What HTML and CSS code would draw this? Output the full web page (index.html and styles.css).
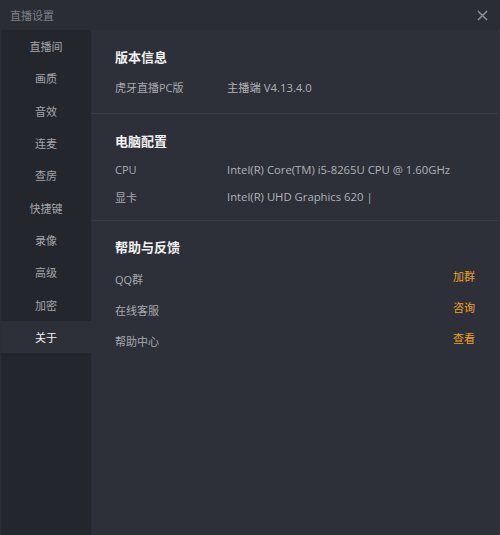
FILE: index.html
```html
<!doctype html>
<html lang="zh-CN">
  <head>
    <meta charset="UTF-8" />
    <title>直播设置</title>
    <link rel="stylesheet" href="styles.css">
  </head>
  <body>
    <div class="window">
      <header class="titlebar">
        <span class="title">直播设置</span>
        <svg class="close" viewBox="0 0 12 12" fill="none" stroke="currentColor" stroke-width="1.6">
          <line x1="1" y1="1" x2="11" y2="11"></line>
          <line x1="11" y1="1" x2="1" y2="11"></line>
        </svg>
      </header>

      <div class="body">
        <nav class="sidebar">
          <a class="nav-item">直播间</a>
          <a class="nav-item">画质</a>
          <a class="nav-item">音效</a>
          <a class="nav-item">连麦</a>
          <a class="nav-item">查房</a>
          <a class="nav-item">快捷键</a>
          <a class="nav-item">录像</a>
          <a class="nav-item">高级</a>
          <a class="nav-item">加密</a>
          <a class="nav-item active">关于</a>
        </nav>

        <main class="content">
          <section class="section version">
            <h2>版本信息</h2>
            <div class="row">
              <span class="label">虎牙直播PC版</span>
              <span class="value">主播端 V4.13.4.0</span>
            </div>
          </section>

          <section class="section hardware">
            <h2>电脑配置</h2>
            <div class="row">
              <span class="label">CPU</span>
              <span class="value">Intel(R) Core(TM) i5-8265U CPU @ 1.60GHz</span>
            </div>
            <div class="row">
              <span class="label">显卡</span>
              <span class="value">Intel(R) UHD Graphics 620 |</span>
            </div>
          </section>

          <section class="section help">
            <h2>帮助与反馈</h2>
            <div class="row link-row">
              <span class="label">QQ群</span>
              <a class="action">加群</a>
            </div>
            <div class="row link-row">
              <span class="label">在线客服</span>
              <a class="action">咨询</a>
            </div>
            <div class="row link-row">
              <span class="label">帮助中心</span>
              <a class="action">查看</a>
            </div>
          </section>
        </main>
      </div>
    </div>
  </body>
</html>
```

FILE: styles.css
```css
:root {
  --color-title: #2a2d34;
  --color-side: #23262d;
  --color-bg: #2d3038;
  --color-line: #383b43;
  --color-text: #a8aab0;
  --color-head: #f2f2f2;
  --color-accent: #f0a21c;
}

html,
body {
  margin: 0;
  padding: 0;
  height: 100%;
}

body {
  font-family: 'Open Sans', 'Noto Sans CJK SC', sans-serif;
  background-color: var(--color-bg);
  color: var(--color-text);
  font-size: 11px;
}

.window {
  height: 535px;
  display: flex;
  flex-direction: column;
}

.titlebar {
  height: 30px;
  flex-shrink: 0;
  background-color: var(--color-title);
  display: flex;
  align-items: center;
  justify-content: space-between;
  padding: 0 12px 0 10px;
}

.title {
  font-size: 11px;
  color: #7d8087;
}

.close {
  width: 11px;
  height: 11px;
  color: #8d9097;
}

.body {
  flex: 1;
  display: flex;
}

.sidebar {
  width: 90px;
  flex-shrink: 0;
  background-color: var(--color-side);
  border-left: 1px solid #2b2e35;
  display: flex;
  flex-direction: column;
}

.nav-item {
  height: 32.3px;
  display: flex;
  align-items: center;
  justify-content: center;
  color: #a3a5ab;
}

.nav-item.active {
  background-color: var(--color-bg);
  color: #f2f2f2;
}

.content {
  flex: 1;
  border-right: 1px solid #34373f;
}

.section {
  padding: 0 24px;
  border-bottom: 1px solid var(--color-line);
}

.section.version {
  padding-top: 17px;
  padding-bottom: 13px;
}

.section.hardware {
  padding-top: 17px;
  padding-bottom: 10px;
}

.section.help {
  padding-top: 16px;
  border-bottom: none;
}

h2 {
  margin: 0 0 5px;
  font-family: 'Noto Sans CJK SC', sans-serif;
  font-size: 13px;
  font-weight: bold;
  color: var(--color-head);
  line-height: 20px;
}

.version h2 {
  margin-bottom: 6px;
}

.help h2 {
  margin-bottom: 6px;
}

.row {
  display: flex;
  align-items: center;
  height: 27px;
}

.label {
  width: 112px;
  flex-shrink: 0;
}

.value {
  font-size: 11.3px;
  color: #b1b3b8;
}

.link-row {
  height: 31px;
  justify-content: space-between;
}

.action {
  color: var(--color-accent);
  margin-top: -5px;
}
```
